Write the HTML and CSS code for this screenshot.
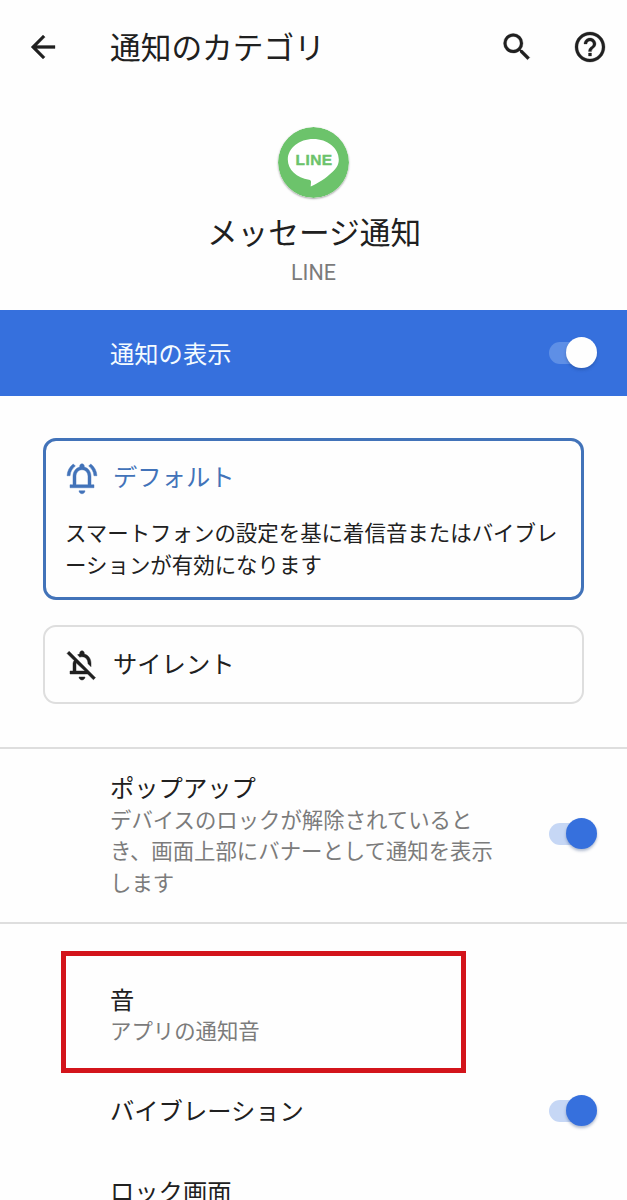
FILE: index.html
```html
<!DOCTYPE html>
<html lang="ja">
<head>
  <meta charset="UTF-8"/>
  <meta name="viewport" content="width=device-width, initial-scale=1.0"/>
  <title>通知のカテゴリ</title>
  <link rel="stylesheet" href="styles.css">
</head>
<body>
  <div class="screen">
    <header class="toolbar">
      <svg class="icon back" viewBox="0 0 24 24"><path d="M20 11H7.83l5.59-5.59L12 4l-8 8 8 8 1.41-1.41L7.83 13H20v-2z"/></svg>
      <h1>通知のカテゴリ</h1>
      <svg class="icon search" viewBox="0 0 24 24"><path d="M15.5 14h-.79l-.28-.27A6.471 6.471 0 0 0 16 9.5 6.5 6.5 0 1 0 9.5 16c1.61 0 3.09-.59 4.23-1.57l.27.28v.79l5 4.99L20.49 19l-4.99-5zm-6 0C7.01 14 5 11.99 5 9.5S7.01 5 9.5 5 14 7.01 14 9.5 11.99 14 9.5 14z"/></svg>
      <svg class="icon help" viewBox="0 0 24 24"><path d="M11 18h2v-2h-2v2zm1-16C6.48 2 2 6.48 2 12s4.48 10 10 10 10-4.48 10-10S17.52 2 12 2zm0 18c-4.41 0-8-3.59-8-8s3.59-8 8-8 8 3.59 8 8-3.59 8-8 8zm0-14c-2.21 0-4 1.79-4 4h2c0-1.1.9-2 2-2s2 .9 2 2c0 2-3 1.75-3 5h2c0-2.25 3-2.5 3-5 0-2.21-1.79-4-4-4z"/></svg>
    </header>

    <section class="app">
      <svg class="app-icon" viewBox="0 0 71 71">
        <circle cx="35.5" cy="35.5" r="35.5" fill="#6cc36b"/>
        <path d="M35.3 12C21.2 12 9.8 21.2 9.8 32.5c0 10.1 9 18.6 21.2 20.2 1.4.3 2 .8 2 2.3l-.3 4.6c4-1.8 12.3-6.2 18.8-12.1C57.5 43 60.8 38.5 60.8 32.5 60.8 21.2 49.4 12 35.3 12z" fill="#fff"/>
        <text x="17.6" y="38.2">LINE</text>
      </svg>
      <h2>メッセージ通知</h2>
      <p>LINE</p>
    </section>

    <div class="banner">
      <span>通知の表示</span>
      <div class="switch light"></div>
    </div>

    <section class="choices">
      <div class="card selected">
        <div class="card-title">
          <svg viewBox="0 0 24 24"><path d="M14 20.5h-4c0 1.1.9 2 2 2s2-.9 2-2zM18 16.5V11c0-3.07-1.63-5.64-4.5-6.32V4c0-.83-.67-1.5-1.5-1.5s-1.5.67-1.5 1.5v.68C7.64 5.36 6 7.92 6 11v5.5H4v2h16v-2h-2zm-2 0H8V11c0-2.48 1.51-4.5 4-4.5s4 2.02 4 4.5v5.5zM7.58 4.08 6.15 2.65C3.75 4.48 2.17 7.3 2.03 10.5h2c.15-2.65 1.51-4.97 3.55-6.42zm12.39 6.42h2c-.15-3.2-1.73-6.02-4.12-7.85l-1.42 1.43c2.02 1.45 3.39 3.77 3.54 6.42z"/></svg>
          <span>デフォルト</span>
        </div>
        <p>スマートフォンの設定を基に着信音またはバイブレーションが有効になります</p>
      </div>
      <div class="card">
        <div class="card-title">
          <svg viewBox="0 0 24 24"><path d="M12 22c1.1 0 2-.9 2-2h-4c0 1.1.9 2 2 2zm0-15.5c2.49 0 4 2.02 4 4.5v.1l2 2V11c0-3.07-1.63-5.64-4.5-6.32V4c0-.83-.67-1.5-1.5-1.5s-1.5.67-1.5 1.5v.68c-.51.12-.99.32-1.45.56L10.6 6.79c.42-.18.9-.29 1.4-.29zM3.41 2.86 2 4.27l4.81 4.81C6.29 9.69 6 10.32 6 11v5H4v2h11.73l3.86 3.86L21 20.45 3.41 2.86zM14 16H8v-5c0-.15.01-.3.03-.45L14 16z"/></svg>
          <span>サイレント</span>
        </div>
      </div>
    </section>

    <section class="row popup">
      <div class="row-text">
        <h3>ポップアップ</h3>
        <p>デバイスのロックが解除されているとき、画面上部にバナーとして通知を表示します</p>
      </div>
      <div class="switch"></div>
    </section>

    <section class="more">
      <div class="row sound">
        <h3>音</h3>
        <p>アプリの通知音</p>
      </div>
      <div class="row vibration">
        <h3>バイブレーション</h3>
        <div class="switch"></div>
      </div>
      <div class="row lock">
        <h3>ロック画面</h3>
      </div>
    </section>
  </div>
</body>
</html>
```
FILE: styles.css
```css
:root {
  --blue: #3670dd;
  --outline: #4273b9;
  --text: #202020;
  --muted: #7b7b7b;
  --line: #dedede;
}

* {
  box-sizing: border-box;
  margin: 0;
  padding: 0;
}

body {
  font-family: 'Noto Sans CJK JP', sans-serif;
  background: #fefefe;
  color: var(--text);
}

h1, h2, h3 {
  font-weight: 400;
}

.screen {
  height: 1200px;
  overflow: hidden;
}

.toolbar {
  height: 94px;
  padding: 0 19px 0 25px;
  display: flex;
  align-items: center;
}

.toolbar h1 {
  flex: 1;
  margin-left: 49px;
  padding-bottom: 2px;
  font-size: 30.7px;
  line-height: 44px;
}

.icon {
  width: 36px;
  height: 36px;
  fill: var(--text);
  stroke: var(--text);
  stroke-width: 0.2;
}

.icon.search {
  margin-right: 37px;
}

.app {
  height: 216px;
  padding-top: 33px;
  text-align: center;
}

.app-icon {
  display: block;
  width: 71px;
  height: 71px;
  margin: 0 auto;
  border-radius: 50%;
  box-shadow: 0 1px 2px rgba(0, 0, 0, 0.35);
}

.app-icon text {
  font-family: 'Liberation Sans', sans-serif;
  font-size: 15.5px;
  font-weight: 700;
  letter-spacing: 0.4px;
  fill: #6cc36b;
  stroke: #6cc36b;
  stroke-width: 0.4;
}

.app h2 {
  margin-top: 11px;
  padding-left: 1px;
  font-size: 30.7px;
  line-height: 44px;
}

.app p {
  margin-top: 4px;
  font-family: Roboto, sans-serif;
  font-size: 21.5px;
  line-height: 32px;
  color: var(--muted);
}

.banner {
  height: 86px;
  padding: 0 30px 0 110px;
  display: flex;
  align-items: center;
  justify-content: space-between;
  background: var(--blue);
  color: #f4fbff;
  font-size: 24.3px;
}

.banner span {
  padding-bottom: 2px;
}

.switch {
  position: relative;
  flex: none;
  width: 48px;
  height: 22px;
  border-radius: 11px;
  background: linear-gradient(to right, #c6d7f5 32px, transparent 32px);
}

.switch::after {
  content: '';
  position: absolute;
  right: 0;
  top: -5px;
  width: 31px;
  height: 31px;
  border-radius: 50%;
  background: var(--blue);
  box-shadow: 0 2px 3px rgba(30, 60, 120, 0.35);
}

.switch.light {
  background: linear-gradient(to right, #5e8fe6 32px, transparent 32px);
}

.switch.light::after {
  background: #fefefe;
}

.choices {
  height: 353px;
  padding: 42px 43px 0;
  border-bottom: 2px solid var(--line);
}

.card {
  height: 79px;
  padding: 0 20px;
  border: 2px solid var(--line);
  border-radius: 13px;
}

.card.selected {
  height: 162px;
  margin-bottom: 25px;
  padding: 0 19px;
  border: 3px solid var(--outline);
}

.card-title {
  height: 75px;
  display: flex;
  align-items: center;
  gap: 13px;
  font-size: 24.3px;
}

.card-title span {
  padding-bottom: 5px;
}

.card-title svg {
  width: 36px;
  height: 36px;
  margin-left: -1px;
  fill: currentColor;
  stroke: currentColor;
  stroke-width: 0.3;
}

.selected .card-title {
  color: var(--outline);
}

.selected .card-title svg {
  margin-bottom: 2px;
}

.selected .card-title span {
  padding-bottom: 6px;
}

.card p {
  width: 500px;
  font-size: 21.45px;
  line-height: 31.5px;
}

.row {
  padding: 0 30px 0 110px;
}

.row h3 {
  font-size: 24.3px;
  line-height: 32px;
}

.row p {
  font-size: 21.4px;
  line-height: 31.2px;
  color: var(--muted);
}

.popup {
  height: 175px;
  padding-bottom: 3px;
  display: flex;
  align-items: center;
  justify-content: space-between;
  border-bottom: 2px solid var(--line);
}

.popup .row-text {
  width: 388px;
}

.more {
  padding-top: 27px;
}

.sound {
  width: 405px;
  height: 122px;
  margin-left: 61px;
  padding: 27px 0 0 44px;
  border: 5px solid #d3141b;
}

.sound p {
  margin-top: -1px;
}

.vibration {
  height: 76px;
  display: flex;
  align-items: center;
  justify-content: space-between;
}

.vibration h3 {
  padding-bottom: 2px;
}

.lock {
  padding-top: 26px;
}
```
